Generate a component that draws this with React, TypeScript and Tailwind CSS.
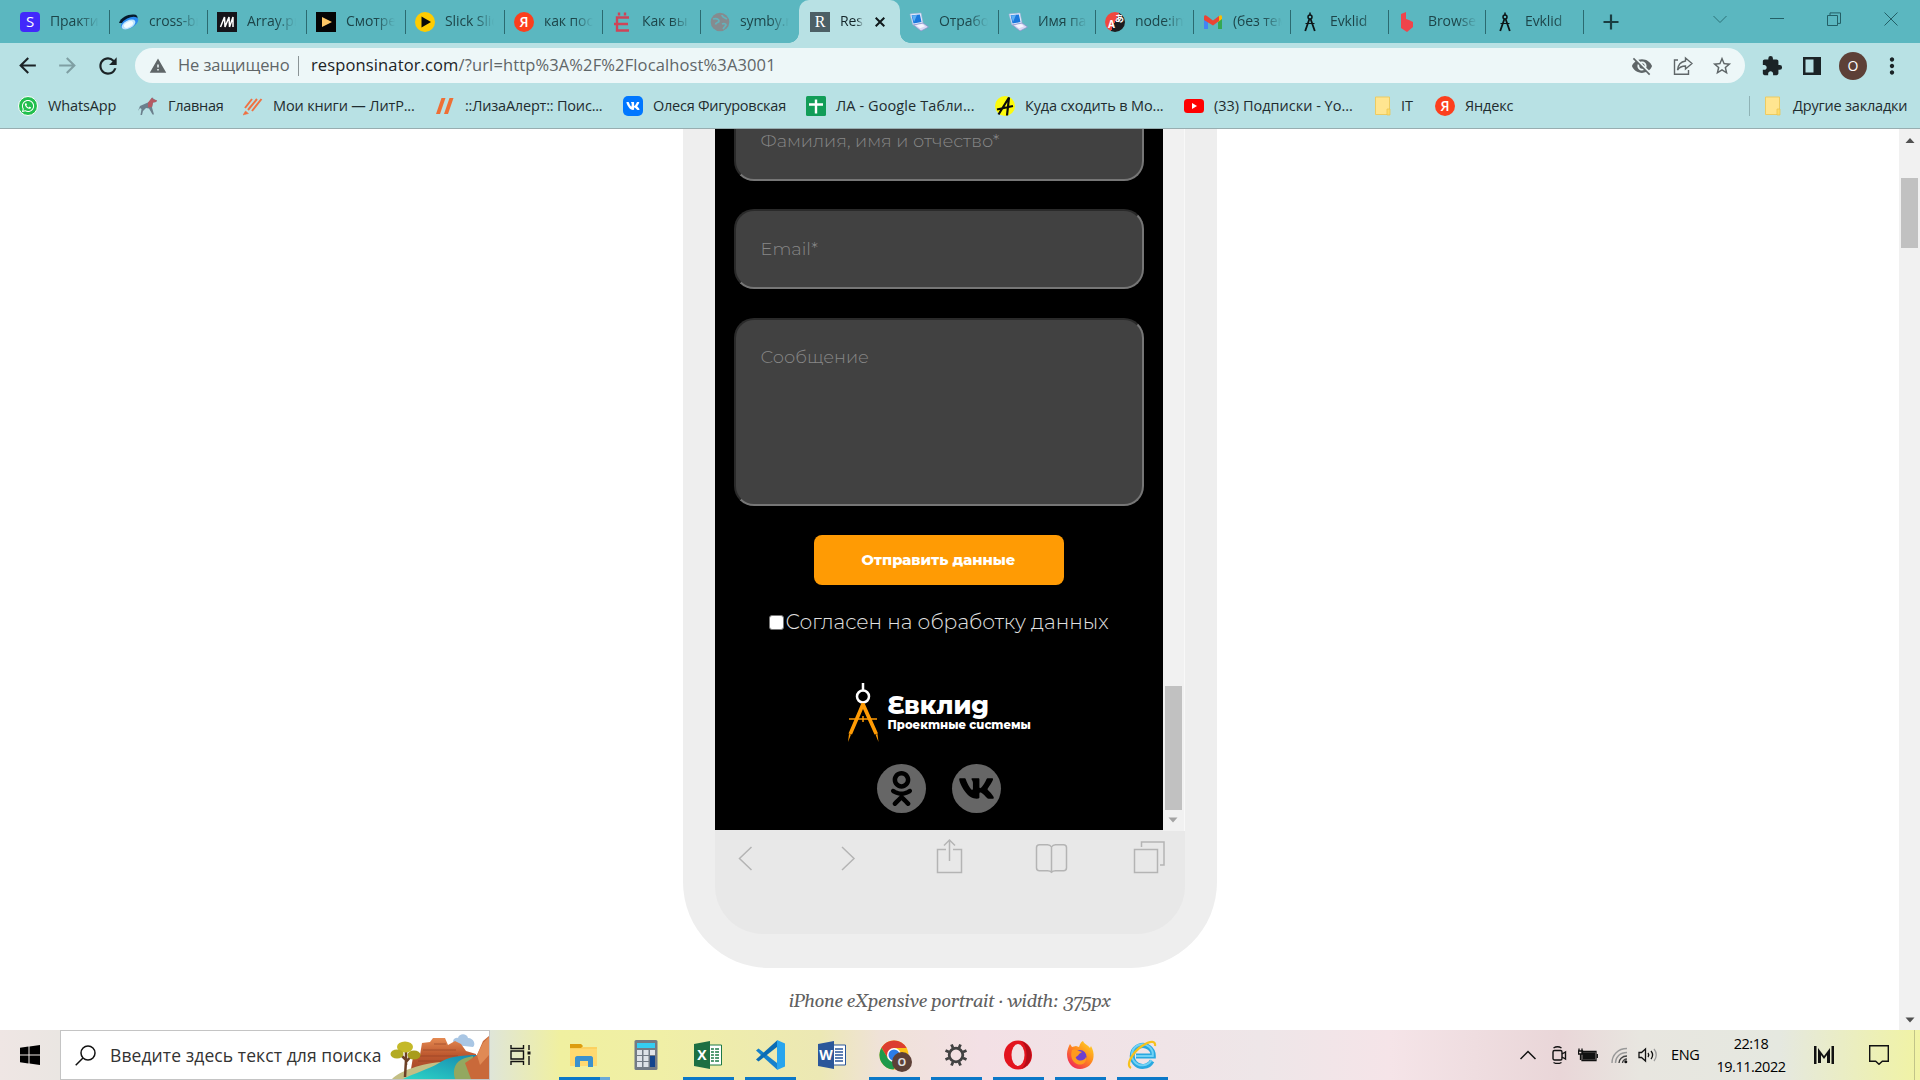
import React from "react";
import {
  MdArrowBack,
  MdArrowForward,
  MdRefresh,
  MdWarning,
  MdVisibilityOff,
  MdStarBorder,
  MdExtension,
  MdMoreVert,
} from "react-icons/md";
import { FaVk, FaOdnoklassniki, FaWhatsapp } from "react-icons/fa";

/* ---------- favicons ---------- */

const Compass = () => (
  <svg viewBox="0 0 20 20" className="h-5 w-5" fill="none" stroke="#0c1416">
    <path d="M10 0.5v3" strokeWidth="1.5" />
    <circle cx="10" cy="5" r="2" strokeWidth="1.5" />
    <path d="M9.4 7L5.2 19M10.6 7l4.2 12" strokeWidth="1.8" />
    <path d="M5.5 11.5h9" strokeWidth="1" />
  </svg>
);

const Laptop = () => (
  <svg viewBox="0 0 20 20" className="h-5 w-5">
    <path d="M1 2l11-1 2 10-10 2z" fill="#e8eefc" stroke="#a9b4dc" strokeWidth=".6" />
    <path d="M2.5 3.2l8.4-.8 1.6 7.7-8 1.4z" fill="#1b78dd" />
    <path d="M3 3.500l5-.5-3 7z" fill="#5fb0f4" />
    <path d="M4.500 13l9.500-2 5.500 4-7.500 4z" fill="#d7d9f3" stroke="#8c8fca" strokeWidth=".7" />
    <path d="M7 13.300l6-1.300 3 2.300-5 2z" fill="#f4f5ff" />
  </svg>
);

const Yandex = () => (
  <span className="flex h-5 w-5 items-center justify-center rounded-full bg-[#fc3f1d] font-['Open_Sans',sans-serif] text-[14px] font-semibold leading-none text-white">
    Я
  </span>
);

const TABS: { title: string; icon: React.ReactNode; sep: boolean; w: string }[] = [
  {
    title: "Практикум",
    w: "w-[99px]",
    sep: true,
    icon: (
      <span className="flex h-5 w-5 items-center justify-center rounded-[4px] bg-[#4229fb] text-[15px] leading-none text-white">S</span>
    ),
  },
  {
    title: "cross-browser",
    w: "w-[98px]",
    sep: true,
    icon: (
      <svg viewBox="0 0 20 20" className="h-5 w-5">
        <path d="M0 11C2 5 9 2 15 2.500c5 .5 4 5 1 9z" fill="#061a2b" />
        <ellipse cx="10.500" cy="11" rx="9.500" ry="5" transform="rotate(-28 10.500 11)" fill="#2a8bf0" />
        <ellipse cx="9.500" cy="12.500" rx="7.500" ry="4" transform="rotate(-28 9.500 12.500)" fill="#bfe4fd" />
        <ellipse cx="9.500" cy="12.500" rx="5" ry="2.500" transform="rotate(-28 9.500 12.500)" fill="#f2fbff" />
      </svg>
    ),
  },
  {
    title: "Array.prototype",
    w: "w-[99px]",
    sep: true,
    icon: (
      <svg viewBox="0 0 20 20" className="h-5 w-5">
        <path d="M0 0h20v20H0z" fill="#15141a" />
        <path d="M3.500 15L7.500 5l.5 10L12 5l.500 10h0M12.500 15L16 5v10" stroke="#fff" strokeWidth="1.500" fill="none" />
      </svg>
    ),
  },
  {
    title: "Смотреть",
    w: "w-[99px]",
    sep: true,
    icon: (
      <svg viewBox="0 0 20 20" className="h-5 w-5">
        <path d="M0 0h20v20H0z" fill="#050505" />
        <path d="M6 5l10 5-10 5z" fill="#ffc766" />
      </svg>
    ),
  },
  {
    title: "Slick Slider",
    w: "w-[99px]",
    sep: true,
    icon: (
      <svg viewBox="0 0 20 20" className="h-5 w-5">
        <circle cx="10" cy="10" r="10" fill="#ffcc00" />
        <path d="M6.500 4.500L16 10l-9.500 5.500z" fill="#0a0a0a" />
      </svg>
    ),
  },
  { title: "как посмотреть", w: "w-[98px]", sep: true, icon: <Yandex /> },
  {
    title: "Как вы",
    w: "w-[98px]",
    sep: true,
    icon: (
      <svg viewBox="0 0 20 20" className="h-5 w-5" fill="none" stroke="#cf4458" strokeWidth="2.400">
        <path d="M17 5.500H5v13h12M2 12h14" />
        <path d="M7 0.500v3M13 0.500v3" />
      </svg>
    ),
  },
  {
    title: "symby.ru",
    w: "w-[98px]",
    sep: false,
    icon: (
      <svg viewBox="0 0 20 20" className="h-5 w-5">
        <circle cx="10" cy="10" r="9.300" fill="#858b8f" />
        <path d="M3 7c3-1 6 0 6 2s-3 1-3.500 3.500M12 3c0 2 3 3 5 4M12 12c2-1 4 0 4 1l-3 4" fill="none" stroke="#63b2bb" strokeWidth="1.800" />
      </svg>
    ),
  },
];

const TABS_RIGHT: typeof TABS = [
  { title: "Отработка", w: "w-[99px]", sep: true, icon: <Laptop /> },
  { title: "Имя пакета", w: "w-[97px]", sep: true, icon: <Laptop /> },
  {
    title: "node:internal",
    w: "w-[98px]",
    sep: true,
    icon: (
      <span className="flex h-5 w-5 items-center overflow-hidden rounded-full bg-[linear-gradient(115deg,#f0483e_50%,#1c1c1f_50%)] text-white">
        <span className="ml-[3px] mt-1 w-[7px] text-[10px] font-bold leading-none">A</span>
        <span className="mb-1.5 font-['Noto_Sans_CJK_JP',sans-serif] text-[9px] font-bold leading-none">あ</span>
      </span>
    ),
  },
  {
    title: "(без темы)",
    w: "w-[97px]",
    sep: true,
    icon: (
      <svg viewBox="0 0 20 20" className="h-5 w-5">
        <path d="M1 5v12h4V7z" fill="#4285f4" />
        <path d="M19 5v12h-4V7z" fill="#34a853" />
        <path d="M15 5l2-1.500c1-.7 2 0 2 1.500v2l-4 3z" fill="#fbbc04" />
        <path d="M1 5c0-1.800 1.500-2.200 3-1l6 4.500L16 4v5l-6 4.500L1 8z" fill="#ea4335" />
      </svg>
    ),
  },
  { title: "Evklid", w: "w-[98px]", sep: true, icon: <Compass /> },
  {
    title: "Browserling",
    w: "w-[97px]",
    sep: true,
    icon: (
      <svg viewBox="0 0 20 20" className="h-5 w-5">
        <path d="M3 2l5-2v7l3 1 4 2v5l-6 5-6-4z" fill="#f0444b" />
      </svg>
    ),
  },
  { title: "Evklid", w: "w-[98px]", sep: true, icon: <Compass /> },
];

const Tab = ({ t }: { t: (typeof TABS)[number] }) => (
  <div className={`flex h-[43px] shrink-0 items-center ${t.w}`}>
    <div className="ml-[9px] flex w-5 shrink-0 justify-center">{t.icon}</div>
    <div className="ml-[10px] w-[49px] shrink-0 overflow-hidden whitespace-nowrap pb-[2px] text-[14px] tracking-[-0.1px] text-[#1d4549] [mask-image:linear-gradient(90deg,#000_60%,transparent)]">
      {t.title}
    </div>
    <div className="grow" />
    {t.sep && <div className="h-6 w-px bg-[#2b6a70]" />}
  </div>
);

const TabStrip = () => (
  <div className="flex h-[43px] bg-[#5bb7c0] pl-[11px]">
    {TABS.map((t, i) => (
      <Tab key={i} t={t} />
    ))}
    <div className="relative flex h-[43px] w-[101px] shrink-0 items-center rounded-t-[10px] bg-[#b8e1e4]">
      <div className="absolute -left-2.5 bottom-0 h-2.5 w-2.5 bg-[radial-gradient(circle_at_0_0,transparent_9.500px,#b8e1e4_10px)]" />
      <div className="absolute -right-2.5 bottom-0 h-2.5 w-2.5 bg-[radial-gradient(circle_at_100%_0,transparent_9.500px,#b8e1e4_10px)]" />
      <div className="ml-[11px] flex h-5 w-5 items-center justify-center bg-[#4c6066] font-['Liberation_Serif',serif] text-[16px] leading-none text-white">R</div>
      <div className="ml-[10px] w-6 overflow-hidden whitespace-nowrap pb-[2px] text-[14px] tracking-[-0.1px] text-[#14262a] [mask-image:linear-gradient(90deg,#000_70%,transparent)]">Resp</div>
      <svg viewBox="0 0 10 10" className="ml-[11px] h-2.5 w-2.5" stroke="#10191b" strokeWidth="2">
        <path d="M.7.7l8.600 8.600M9.300.7L.7 9.300" />
      </svg>
    </div>
    {TABS_RIGHT.map((t, i) => (
      <Tab key={i} t={t} />
    ))}
    <div className="flex h-[43px] grow items-center">
      <svg viewBox="0 0 16 16" className="ml-[19px] h-4 w-4" stroke="#1a3d41" strokeWidth="2.200">
        <path d="M8 0.500v15M.5 8h15" />
      </svg>
      <div className="grow" />
      <div className="mb-1.5 mr-[22px] flex items-center gap-[43px]">
        <svg viewBox="0 0 14 14" className="h-[14px] w-[14px]" fill="none" stroke="#2c7279">
          <path d="M.5 4L7 10.500 13.500 4" />
        </svg>
        <svg viewBox="0 0 14 14" className="h-[14px] w-[14px]" fill="none" stroke="#235f66">
          <path d="M0 6.500h14" />
        </svg>
        <svg viewBox="0 0 14 14" className="h-[14px] w-[14px]" fill="none" stroke="#235f66">
          <path d="M.5 3.500h10v10H.5zM3 3V.9h10.500v10.500H11" />
        </svg>
        <svg viewBox="0 0 14 14" className="h-[14px] w-[14px]" fill="none" stroke="#235f66">
          <path d="M.5.5l13 13M13.500.5l-13 13" />
        </svg>
      </div>
    </div>
  </div>
);

/* ---------- address bar ---------- */

const AddressBar = () => (
  <div className="flex h-[45px] items-center bg-[#b8e1e4] text-[#1b2326]">
    <MdArrowBack className="ml-[15px] h-[25px] w-[25px]" />
    <MdArrowForward className="ml-[15px] h-[25px] w-[25px] text-[#7f9fa3]" />
    <MdRefresh className="ml-[15px] h-[26px] w-[26px]" />
    <div className="ml-[14px] flex h-[35px] w-[1610px] items-center rounded-full bg-[#edf7f8] text-[16.500px] text-[#5f6668]">
      <MdWarning className="ml-3.5 h-[18px] w-[18px]" />
      <span className="ml-[11px] w-[112px] whitespace-nowrap tracking-[-0.1px]">Не защищено</span>
      <span className="ml-[8px] h-5 w-px bg-[#8b9496]" />
      <span className="ml-3 whitespace-nowrap tracking-[0.130px]">
        <span className="text-[#1b2326]">responsinator.com</span>/?url=http%3A%2F%2Flocalhost%3A3001
      </span>
      <span className="grow" />
      <MdVisibilityOff className="h-[22px] w-[22px]" />
      <svg viewBox="0 0 20 20" className="ml-5 h-5 w-5" fill="none" stroke="currentColor" strokeWidth="1.400">
        <path d="M5 4H1.500v14.300h14V14" />
        <path d="M12.500 2L19 7.500 12.500 13v-3C9 10 6.500 11 4.500 14c.5-5 3.500-8.300 8-9z" />
      </svg>
      <MdStarBorder className="ml-[18px] mr-[12px] h-[22px] w-[22px]" />
    </div>
    <MdExtension className="ml-[16px] h-[22px] w-[22px]" />
    <svg viewBox="0 0 18 18" className="ml-[20px] h-[18px] w-[18px]">
      <path d="M0 0h18v18H0z" fill="#1b2326" />
      <path d="M2.500 2.500h8v13h-8z" fill="#b8e1e4" />
    </svg>
    <div className="ml-[18px] flex h-7 w-7 items-center justify-center rounded-full bg-[#5d4037] text-[14px] text-white">O</div>
    <MdMoreVert className="ml-[12px] h-[26px] w-[26px]" />
  </div>
);

/* ---------- bookmarks ---------- */

const Folder = () => (
  <svg viewBox="0 0 16 20" className="h-5 w-4">
    <path d="M.5 1h14v17.500h-14z" fill="#ffe590" stroke="#eccb62" />
    <path d="M12 13h3v6h-3z" fill="#fddc6c" stroke="#e9c14c" strokeWidth=".7" />
  </svg>
);

const BOOKMARKS: { text: string; icon: React.ReactNode; w: string; tr: string }[] = [
  {
    text: "WhatsApp",
    w: "w-[120px]",
    tr: "tracking-[-0.150px]",
    icon: (
      <span className="flex h-5 w-5 items-center justify-center rounded-full border border-white bg-[#22bf4e]">
        <FaWhatsapp className="h-3.5 w-3.5 text-white" />
      </span>
    ),
  },
  {
    text: "Главная",
    w: "w-[105px]",
    tr: "tracking-[-0.300px]",
    icon: (
      <svg viewBox="0 0 20 20" className="h-5 w-5">
        <path d="M2 10l9-4 3-4 1-.5.5 1.500L19 4.500 18 6l-3 .5-1 5 2 7h-1.500L11 12.500 8 12l-3 3-1 4H2.500l1-6L2 12l-2 3z" fill="#6b7f8c" />
        <path d="M10 6.500l4-5 .8 1.500L19 4.500 18 6l-3 .5L14 11l-4 .5z" fill="#b55a63" />
      </svg>
    ),
  },
  {
    text: "Мои книги — ЛитР...",
    w: "w-[192px]",
    tr: "tracking-[-0.150px]",
    icon: (
      <svg viewBox="0 0 20 20" className="h-5 w-5" stroke="#ef7142" strokeWidth="2">
        <path d="M2 12L9 3M5 14l9-11M9 15L18.500 3" />
        <path d="M0 19l2.500-4 3 2.500z" fill="#ef7142" strokeWidth=".5" />
      </svg>
    ),
  },
  {
    text: "::ЛизаАлерт:: Поис...",
    w: "w-[188px]",
    tr: "tracking-[-0.200px]",
    icon: (
      <svg viewBox="0 0 20 20" className="h-5 w-5" fill="#ee6f35">
        <path d="M6.500 2h4L5 18H1zM14.500 2h4L13 18H9z" />
      </svg>
    ),
  },
  {
    text: "Олеся Фигуровская",
    w: "w-[183px]",
    tr: "tracking-[-0.250px]",
    icon: (
      <span className="flex h-5 w-5 items-center justify-center rounded-[5px] bg-[#0077ff]">
        <FaVk className="h-3.5 w-3.5 text-white" />
      </span>
    ),
  },
  {
    text: "ЛА - Google Табли...",
    w: "w-[189px]",
    tr: "tracking-[0.100px]",
    icon: (
      <svg viewBox="0 0 20 20" className="h-5 w-5">
        <rect width="20" height="20" rx="1.500" fill="#129d58" />
        <path d="M10 3.500v14M3 8.500h14" stroke="#fff" strokeWidth="2.400" />
      </svg>
    ),
  },
  {
    text: "Куда сходить в Мо...",
    w: "w-[189px]",
    tr: "tracking-[-0.150px]",
    icon: (
      <svg viewBox="0 0 20 20" className="h-5 w-5">
        <circle cx="10" cy="10" r="10" fill="#fdfb0c" />
        <path d="M3.500 18.500L14 1.500 12 19.500M2 13.500L18 10" stroke="#0a0a0a" strokeWidth="2.200" fill="none" />
      </svg>
    ),
  },
  {
    text: "(33) Подписки - Yo...",
    w: "w-[191px]",
    tr: "tracking-[0px]",
    icon: (
      <svg viewBox="0 0 20 20" className="h-5 w-5">
        <rect y="3" width="20" height="14" rx="3.500" fill="#f00" />
        <path d="M8 7l5 3-5 3z" fill="#fff" />
      </svg>
    ),
  },
  { text: "IT", w: "w-[60px]", tr: "tracking-[-0.100px]", icon: <Folder /> },
  { text: "Яндекс", w: "w-[100px]", tr: "tracking-[-0.150px]", icon: <Yandex /> },
];

const Bookmarks = () => (
  <div className="flex h-[41px] items-center border-b border-[#98adb0] bg-[#b8e1e4] pb-[5px] pl-[18px] text-[14.500px] text-[#1f2c2f]">
    {BOOKMARKS.map((b) => (
      <div key={b.text} className={`flex shrink-0 items-center gap-[10px] whitespace-nowrap ${b.w} ${b.tr}`}>
        {b.icon}
        <span>{b.text}</span>
      </div>
    ))}
    <div className="grow" />
    <div className="mr-[15px] h-5 w-px bg-[#8fb3b6]" />
    <Folder />
    <span className="ml-3 mr-[12px] w-[115px] whitespace-nowrap tracking-[-0.200px]">Другие закладки</span>
  </div>
);

/* ---------- phone ---------- */

const fieldClass =
  "w-[410px] shrink-0 rounded-[20px] border-2 border-b-[#767676] border-l-[#2a2a2a] border-r-[#767676] border-t-[#2a2a2a] bg-[#414141] pl-[25px] text-[17.800px] font-light text-[#878787]";

const PhoneScreen = () => (
  <div className="flex h-[701px] w-[448px] flex-col items-center overflow-hidden bg-black font-['Montserrat','Inter',sans-serif]">
    <div className={`${fieldClass} -mt-[28px] flex h-20 items-center`}>
      <span className="whitespace-nowrap">Фамилия, имя и отчество*</span>
    </div>
    <div className={`${fieldClass} mt-7 flex h-20 items-center`}>
      <span>Email*</span>
    </div>
    <div className={`${fieldClass} mt-[29px] h-[188px] pt-[24px]`}>Сообщение</div>
    <div className="mt-[29px] flex h-[50px] w-[250px] shrink-0 items-center justify-center rounded-[8px] bg-[#ff9b04] text-[14.700px] font-extrabold text-white">
      Отправить данные
    </div>
    <div className="mt-[22px] flex h-[30px] shrink-0 items-center">
      <span className="h-[15px] w-[15px] rounded-[3px] border border-[#767676] bg-white" />
      <span className="ml-[2px] w-[323px] whitespace-nowrap text-[20.200px] font-light text-[#e2e2e2]">Согласен на обработку данных</span>
    </div>
    <div className="mt-[46px] flex h-[60px] w-[184px] shrink-0">
      <svg viewBox="0 0 32 60" className="ml-px h-[60px] w-8 shrink-0" fill="none">
        <path d="M15 0v8" stroke="#fff" strokeWidth="2.500" />
        <circle cx="15" cy="13.500" r="6" stroke="#fff" strokeWidth="2.500" />
        <path d="M13.500 20h3l13.500 30.500-3.500 1L15 26 4 51.500.5 50.500z" fill="#ff9b04" />
        <path d="M1 36h28M15 33v6" stroke="#ff9b04" strokeWidth="1.500" />
        <path d="M1 51L0 59l3-7.500zM29.500 51l1 8-3-7.500z" fill="#ff9b04" />
      </svg>
      <div className="ml-2 flex flex-col pt-[9px] text-white">
        <span className="h-[26px] whitespace-nowrap text-[25px] font-extrabold leading-[27px]">Ɛвклиg</span>
        <span className="whitespace-nowrap text-[11.600px] font-extrabold leading-[14px]">Проекmные сucmемы</span>
      </div>
    </div>
    <div className="mt-[21px] flex shrink-0 gap-[26px]">
      <span className="flex h-[49px] w-[49px] items-center justify-center rounded-full bg-[#666]">
        <FaOdnoklassniki className="h-[35px] w-[35px] text-black" />
      </span>
      <span className="flex h-[49px] w-[49px] items-center justify-center rounded-full bg-[#666]">
        <FaVk className="h-[37px] w-[37px] text-black" />
      </span>
    </div>
  </div>
);

const SafariBar = () => (
  <svg viewBox="0 0 470 104" className="h-[104px] w-[470px]" fill="none" stroke="#b4b4b4" strokeWidth="1.500">
    <path d="M36.500 17l-12 11.500 12 11.500M127 17l12 11.500L127 40" />
    <path d="M231 19.500h-8.500v23h24v-23H238M234.500 31V11M229 15.500l5.500-5.500 5.500 5.500" />
    <path d="M336.500 17c-1-1.800-2-2.300-4-2.300h-8c-2 0-3 1-3 3v20c0 2 1 3 3 3h8c2 0 3 .3 4 1.500 1-1.200 2-1.500 4-1.500h8c2 0 3-1 3-3v-20c0-2-1-3-3-3h-8c-2 0-3 .5-4 2.300zM336.500 17v25" />
    <path d="M419.500 19.500h23v23h-23zM426.500 17v-5h22.500v23H445" />
  </svg>
);

const Arrow = ({ up }: { up?: boolean }) => (
  <svg viewBox="0 0 10 6" className="h-[6px] w-[10px]" fill="#505050">
    {up ? <path d="M5 0l4.500 5H.5z" /> : <path d="M5 5.500L9.500.5H.5z" />}
  </svg>
);

const Page = () => (
  <div className="flex h-[901px] bg-white">
    <div className="flex w-[1899px] flex-col items-center">
      <div className="flex h-[839px] w-[534px] justify-center rounded-b-[86px] bg-[#eeeeee]">
        <div className="flex h-[805px] w-[470px] flex-col overflow-hidden rounded-b-[48px] bg-[#e8e8e8]">
          <div className="flex h-[701px]">
            <PhoneScreen />
            <div className="flex h-[702px] w-[21px] flex-col items-center bg-[#f1f1f1] pt-[557px]">
              <div className="h-[124px] w-[17px] shrink-0 bg-[#c1c1c1]" />
              <svg viewBox="0 0 10 6" className="mt-[7px] h-[6px] w-[10px] shrink-0" fill="#a3a3a3">
                <path d="M5 5.500L9.500.5H.5z" />
              </svg>
            </div>
            <div className="h-[702px] w-px bg-[#f8f8f8]" />
          </div>
          <SafariBar />
        </div>
      </div>
      <div className="mt-[21px] whitespace-nowrap font-['Georgia','Gelasio','Liberation_Serif',serif] text-[18.500px] italic leading-[26px] tracking-[-0.450px] text-[#606060]">
        iPhone eXpensive portrait · width: 375px
      </div>
    </div>
    <div className="flex w-[21px] flex-col items-center bg-[#f1f1f1] pt-[9px]">
      <Arrow up />
      <div className="mt-[34px] h-[70px] w-[17px] bg-[#c1c1c1]" />
      <div className="grow" />
      <div className="mb-[7px]">
        <Arrow />
      </div>
    </div>
  </div>
);

/* ---------- taskbar ---------- */

const Canyon = () => (
  <svg viewBox="0 0 100 48" className="h-12 w-[100px]">
    <defs>
      <linearGradient id="rock" x1="0" y1="0" x2="0" y2="1">
        <stop offset="0" stopColor="#e58a52" />
        <stop offset=".5" stopColor="#bf5a30" />
        <stop offset="1" stopColor="#a8482a" />
      </linearGradient>
      <linearGradient id="river" x1="1" y1="0" x2="0" y2="1">
        <stop offset="0" stopColor="#1787b0" />
        <stop offset="1" stopColor="#2cd6c6" />
      </linearGradient>
    </defs>
    <path d="M66 14c-4-3-1-8 3-7 1-5 9-5 10 0 6 0 8 7 5 9z" fill="#a9c6e4" />
    <path d="M22 38l2-12 7-2 2-12 8-1 3-4h12l3 7 7-4 6 3 5 7 10 3v16H22z" fill="url(#rock)" />
    <path d="M29 25h40M34 19h33M29 30h30M45 13h12" stroke="#8f3f22" strokeOpacity=".4" strokeWidth="1.300" />
    <path d="M3 48c8-8 30-16 50-17l16-4-6 21z" fill="#c3bf85" />
    <path d="M14 48c12-6 26-10 36-16 8-6 22-8 39-8-12 6-17 12-19 24z" fill="url(#river)" />
    <path d="M66 48c-3-9 0-18 10-21l8-2-2 23z" fill="#93a860" />
    <path d="M76 32l12-8 6-14 6-5v43H82z" fill="#c9693a" />
    <path d="M88 24l6-12 6-6v18l-9 10z" fill="#e08a55" />
    <path d="M16 46l1-17-7-7M17 31l7-8M17 34v-13" stroke="#6c4026" strokeWidth="2.500" fill="none" />
    <ellipse cx="16" cy="16" rx="8" ry="5.500" fill="#c4b928" />
    <ellipse cx="8" cy="23" rx="6.500" ry="4.500" fill="#b3ab22" />
    <ellipse cx="25" cy="24" rx="6.500" ry="4.500" fill="#a89c1c" />
  </svg>
);

const Office = ({ letter, color, light }: { letter: string; color: string; light: string }) => (
  <span className="relative flex h-7 w-7 items-center">
    <svg viewBox="0 0 28 28" className="absolute inset-0 h-7 w-7">
      <path d="M14 4h13.500v20H14z" fill="#fff" stroke={light} />
      <path d="M17 8h8M17 11h8M17 14h8M17 17h8M17 20h8" stroke={light} strokeWidth="1.700" />
      {letter === "X" && <path d="M20.500 6v16" stroke="#fff" strokeWidth="1.200" />}
      <path d="M0 3L16 0v28L0 25z" fill={color} />
    </svg>
    <span className="relative w-4 text-center text-[14px] font-bold leading-none text-white">{letter}</span>
  </span>
);

const APPS: { icon: React.ReactNode; open: boolean }[] = [
  {
    open: true,
    icon: (
      <svg viewBox="0 0 28 28" className="h-7 w-7">
        <path d="M0 3h11l2 3h14v19H0z" fill="#fbd160" />
        <path d="M0 3h11l2 2-2 2H0z" fill="#dc9d10" />
        <path d="M0 8h27v17H0z" fill="#ffd970" />
        <path d="M5 26V17c0-1 1-2 2-2h14c1 0 2 1 2 2v9h-5v-6h-8v6z" fill="#3c91cd" />
      </svg>
    ),
  },
  {
    open: false,
    icon: (
      <svg viewBox="0 0 24 30" className="h-[30px] w-6">
        <rect x=".5" width="23" height="30" rx="1.500" fill="#737b85" />
        <path d="M3 3h18v5H3z" fill="#35cdf2" />
        <path d="M3 10h5v5H3zM9.500 10h5v5h-5zM16 10h5v5h-5zM3 16h5v5H3zM9.500 16h5v5h-5zM3 22h5v5H3zM9.500 22h5v5h-5z" fill="#dfe3e8" />
        <path d="M16 16h5v11h-5z" fill="#12458d" />
      </svg>
    ),
  },
  { open: true, icon: <Office letter="X" color="#1d6f42" light="#1d7a47" /> },
  {
    open: true,
    icon: (
      <svg viewBox="0 0 30 30" className="h-[30px] w-[30px]">
        <path d="M1 10.500L3.500 8.500 22 23v6.500z" fill="#1581cc" />
        <path d="M1 19.500l2.500 2L22 7V.5z" fill="#0b6cb4" />
        <path d="M22 0l8 3.500v23L22 30z" fill="#27a5ee" />
      </svg>
    ),
  },
  { open: false, icon: <Office letter="W" color="#2b579a" light="#2b579a" /> },
  {
    open: true,
    icon: (
      <span className="relative">
        <svg viewBox="0 0 30 30" className="h-[30px] w-[30px]">
          <circle cx="15" cy="15" r="14.500" fill="#fbc116" />
          <path d="M2.500 7.500A14.500 14.500 0 0 1 27.600 8H15l-6.500 10z" fill="#dc3d30" />
          <path d="M2.400 7.700A14.500 14.500 0 0 0 14.500 29.500L21 18.500H9z" fill="#1e9a4c" />
          <circle cx="15" cy="15" r="7" fill="#fff" />
          <circle cx="15" cy="15" r="5.500" fill="#2b7de9" />
        </svg>
        <span className="absolute -bottom-0.5 -right-[3px] flex h-5 w-5 items-center justify-center rounded-full bg-[#5d4037] text-[11px] font-bold text-[#ddd]">O</span>
      </span>
    ),
  },
  {
    open: true,
    icon: (
      <svg viewBox="0 0 24 24" className="h-6 w-6" fill="none" stroke="#424242">
        <circle cx="12" cy="12" r="6.800" strokeWidth="2.800" />
        <path d="M9 5L7.500 1.500M15 5l1.500-3.500M9 19l-1.500 3.500M15 19l1.500 3.500M5 9L1.500 7.500M5 15l-3.500 1.500M19 9l3.500-1.500M19 15l3.500 1.500" strokeWidth="2.800" />
      </svg>
    ),
  },
  {
    open: true,
    icon: (
      <svg viewBox="0 0 30 30" className="h-[30px] w-[30px]">
        <ellipse cx="15" cy="15" rx="14" ry="14.500" fill="#e3141e" />
        <path d="M18 1a14 14.500 0 0 1 0 28c4-3 5.500-8 5.500-14S22 4 18 1z" fill="#b30d18" />
        <ellipse cx="15" cy="15" rx="6.500" ry="11" fill="#f2e1e4" />
      </svg>
    ),
  },
  {
    open: true,
    icon: (
      <svg viewBox="0 0 28 28" className="h-7 w-7">
        <defs>
          <linearGradient id="ff" x1="1" y1="0" x2="0.200" y2="1">
            <stop offset="0" stopColor="#ffe226" />
            <stop offset=".5" stopColor="#ff8a1e" />
            <stop offset="1" stopColor="#f0235a" />
          </linearGradient>
        </defs>
        <path d="M1 13C1 9 3 5 4 3l2 3 4-1 3 1c1-4 3-6 4-6 1 3 5 4 7 7l1-2c2 4 3 7 2.500 11C27 23 21 28 14 28S1 22 1 13z" fill="url(#ff)" />
        <circle cx="14" cy="15.500" r="6.500" fill="#6f3fd0" />
        <path d="M6 9c3-1 5 0 7 1l3 1-3 2c-1 3-4 2-3 4 2 4 9 3 10-1 1 6-4 9-9 7s-7-8-5-14z" fill="#ff9a1f" />
      </svg>
    ),
  },
  {
    open: true,
    icon: (
      <svg viewBox="0 0 30 30" className="h-[30px] w-[30px]" fill="none">
        <path d="M25 21a10.500 10.500 0 1 1 1.300-5H9" stroke="#29a8e0" strokeWidth="5" />
        <path d="M24.500 20a10.500 10.500 0 1 1 1.300-4H9" stroke="#72d2f5" strokeWidth="2" />
        <path d="M4 28C-2 25 6 12 15 6S29 1 28 6" stroke="#f6c11c" strokeWidth="2.200" />
      </svg>
    ),
  },
];

const Tray = () => (
  <div className="flex h-[50px] items-center text-black">
    <svg viewBox="0 0 16 10" className="h-2.5 w-4" fill="none" stroke="#111" strokeWidth="1.500">
      <path d="M.5 9L8 1.500 15.500 9" />
    </svg>
    <svg viewBox="0 0 15 18" className="ml-4 h-[18px] w-[15px]" fill="none" stroke="#111" strokeWidth="1.400">
      <rect x="1" y="4.500" width="9" height="9.500" rx="1.500" />
      <path d="M10 8l3.500-2v7L10 11M1.500 2C4 .5 7 .5 9.500 2M1.500 16.500c2.500 1.300 5.500 1.300 8 0" />
    </svg>
    <svg viewBox="0 0 20 14" className="ml-[11px] h-3.5 w-5" fill="none" stroke="#111" strokeWidth="1.300">
      <path d="M4 3.500h14v9H4z" />
      <path d="M5.500 5h11v6h-11z" fill="#111" />
      <path d="M19.300 6v4M1 .5v2M4 .5v2M.5 3h4v3h-4zM2.500 6v6" />
    </svg>
    <svg viewBox="0 0 17 17" className="ml-[13px] h-[17px] w-[17px]" fill="none" strokeWidth="1.400">
      <path d="M1 16C1 8 7 1.500 16 1.500M4.500 16C4.500 10 9 5.500 16 5.500" stroke="#999" />
      <path d="M8 16c0-3.500 3-7 8-7M11.500 16c0-2 2-4 4.500-4" stroke="#444" />
      <circle cx="14.800" cy="14.800" r="1.500" fill="#111" />
    </svg>
    <svg viewBox="0 0 20 16" className="ml-[10px] h-4 w-5" fill="none" stroke="#111" strokeWidth="1.300">
      <path d="M1 5.500h2.500L7.500 2v12l-4-3.500H1z" />
      <path d="M10 6c1 1.300 1 2.700 0 4M13 4c2 2.500 2 5.500 0 8" />
      <path d="M16 2c3 3.500 3 8.500 0 12" stroke="#999" />
    </svg>
    <span className="ml-[13px] w-[30px] text-[14.500px] tracking-[-0.4px]">ENG</span>
    <div className="ml-[14px] flex w-[72px] flex-col items-center text-[14.500px] leading-[23px] tracking-[-0.500px]">
      <span>22:18</span>
      <span>19.11.2022</span>
    </div>
    <svg viewBox="0 0 20 18" className="ml-[27px] h-[18px] w-5" fill="#111">
      <path d="M0 0h2.500v18H0zM17.500 0H20v18h-2.500zM4 2l6 8 6-8v15h-3v-8l-3 4-3-4v8H4z" />
    </svg>
    <svg viewBox="0 0 20 20" className="ml-[35px] h-5 w-5" fill="none" stroke="#111" strokeWidth="1.400">
      <path d="M.7.7h18.600v15.600h-6L10 19.300 6.700 16.300h-6z" />
    </svg>
    <div className="ml-[25px] mr-[5px] h-[50px] w-px bg-[#c2c489]" />
  </div>
);

const Taskbar = () => (
  <div className="flex h-[50px] bg-[linear-gradient(90deg,#efe6e4_0,#eae6e2_60px,#dfe5d8_490px,#f0f0a0_560px,#f0efa6_660px,#ece8b4_820px,#efe2d8_880px,#f3e0e5_980px,#eee6e8_1260px,#f5e4e8_1390px,#e9d6d8_1560px,#e8e6e0_1640px,#e5e8e0_1780px,#edf0b4_1880px,#f1f3a4_1920px)]">
    <div className="flex w-[60px] items-center justify-center">
      <svg viewBox="0 0 20 20" className="h-5 w-5" fill="#000">
        <path d="M0 2.800L8.500 1.600v8H0zM9.500 1.400L20 0v9.600H9.500zM0 10.500h8.500v8L0 17.200zM9.500 10.500H20V20L9.500 18.600z" />
      </svg>
    </div>
    <div className="flex w-[430px] items-center border border-[#c4c4c4] bg-white">
      <svg viewBox="0 0 21 21" className="ml-[14px] h-[21px] w-[21px]" fill="none" stroke="#111" strokeWidth="1.500">
        <circle cx="13" cy="8" r="7" />
        <path d="M8 13L.7 20.300" />
      </svg>
      <span className="ml-[14px] w-[279px] whitespace-nowrap text-[17.500px] tracking-[0.090px] text-[#333]">Введите здесь текст для поиска</span>
      <Canyon />
    </div>
    <div className="flex w-[63px] items-center justify-center pr-px">
      <svg viewBox="0 0 22 20" className="h-5 w-[22px]" fill="none" stroke="#111" strokeWidth="1.400">
        <path d="M1 0v3.500h12.500V0M1 20v-3.500h12.500V20M1 6h12.500v8H1zM19 0v5M19 11v9" />
        <path d="M17.500 6.500h3v3h-3z" fill="#111" stroke="none" />
      </svg>
    </div>
    {APPS.map((a, i) => (
      <div key={i} className="flex w-[62px] flex-col items-center">
        <div className="flex h-[47px] items-center pt-[3px]">{a.icon}</div>
        {a.open && (
          <div className="flex h-[3px] w-[51px] bg-[#0b78c8]">
            {i === 0 && <div className="ml-auto h-[3px] w-2.5 bg-[#6aa9d8]" />}
          </div>
        )}
      </div>
    ))}
    <div className="grow" />
    <Tray />
  </div>
);

export default function App() {
  return (
    <div className="flex h-[1080px] w-[1920px] flex-col overflow-hidden bg-white font-['Open_Sans','Noto_Sans',sans-serif]">
      <TabStrip />
      <AddressBar />
      <Bookmarks />
      <Page />
      <Taskbar />
    </div>
  );
}
